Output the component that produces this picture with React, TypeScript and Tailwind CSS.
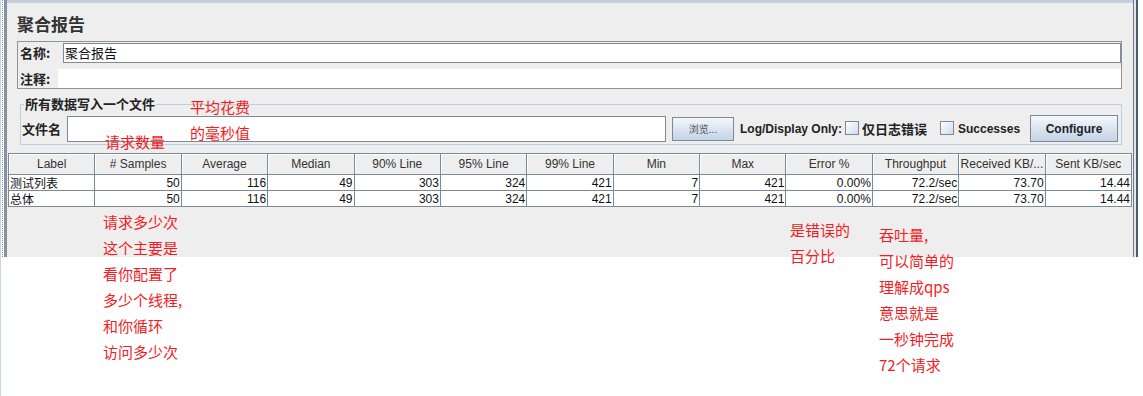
import React from "react";

const cjk = { fontFamily: '"Noto Sans CJK SC", "Liberation Sans", sans-serif' };
const sans = { fontFamily: '"Liberation Sans", Arial, "Noto Sans CJK SC", sans-serif' };

const headers = [
  "Label",
  "# Samples",
  "Average",
  "Median",
  "90% Line",
  "95% Line",
  "99% Line",
  "Min",
  "Max",
  "Error %",
  "Throughput",
  "Received KB/...",
  "Sent KB/sec",
];

const rows = [
  ["测试列表", "50", "116", "49", "303", "324", "421", "7", "421", "0.00%", "72.2/sec", "73.70", "14.44"],
  ["总体", "50", "116", "49", "303", "324", "421", "7", "421", "0.00%", "72.2/sec", "73.70", "14.44"],
];

function Checkbox() {
  return (
    <span className="inline-block w-[14px] h-[14px] border border-[#7a8a99] bg-gradient-to-br from-[#ffffff] to-[#cfdbe8] shrink-0" />
  );
}

function Note({ lines, className }: { lines: string[]; className: string }) {
  return (
    <div className={"absolute text-[15px] leading-[26px] text-[#f31c24] whitespace-nowrap " + className} style={cjk}>
      {lines.map((l, i) => (
        <div key={i}>{l}</div>
      ))}
    </div>
  );
}

export default function App() {
  return (
    <div className="relative w-[1143px] h-[396px] bg-white overflow-hidden">
      <div className="absolute left-0 top-0 w-[1px] h-full bg-[#c9d6ea]" />
      <div className="flex h-[257px]">
        {/* left dotted strip */}
        <div className="w-[1px] h-full bg-[#c9d6ea]" />
        <div className="w-[3px] flex justify-center">
          <div className="w-0 h-full border-l border-dotted border-[#8a96a4]" />
        </div>
        <div className="w-[3px] h-full bg-[#8593a3]" />
        <div className="flex flex-col w-[1126px]">
          <div className="h-[3px] bg-[#c6cfe0]" />
          <div className="flex-1 bg-[#eeeeee] flex flex-col">
            {/* title */}
            <div className="h-[38px] flex items-center pl-[10px] pt-[3px] text-[17px] font-bold text-[#333]" style={cjk}>
              聚合报告
            </div>

            {/* name / comment box */}
            <div className="ml-[10px] mr-[11px] h-[48px] border border-[#8e9398] flex flex-col">
              <div className="flex items-center h-[21px] pt-[1px]">
                <span className="w-[45px] pl-[2px] text-[13px] font-bold text-[#222]" style={cjk}>
                  名称:
                </span>
                <div className="flex-1 h-[20px] bg-white border border-[#7a8a99] flex items-center pl-[1px] text-[13px] text-[#111]" style={cjk}>
                  聚合报告
                </div>
              </div>
              <div className="flex items-center h-[19px] mt-[6px]">
                <span className="w-[40px] pl-[2px] text-[13px] font-bold text-[#222]" style={cjk}>
                  注释:
                </span>
                <div className="flex-1 h-full bg-white" />
              </div>
            </div>

            {/* fieldset */}
            <fieldset className="ml-[13px] mr-[11px] mt-[7px] border border-[#b9cfe5] px-[1px] pb-[2px]">
              <legend className="ml-[2px] px-[1px] h-[16px] leading-[16px] text-[13px] font-bold text-[#222]" style={cjk}>
                所有数据写入一个文件
              </legend>
              <div className="flex items-center h-[27px] mt-[3px]">
                <span className="w-[45px] text-[13px] font-bold text-[#222]" style={cjk}>
                  文件名
                </span>
                <div className="w-[599px] h-[26px] bg-white border border-[#7a8a99]" />
                <button
                  className="ml-[6px] w-[62px] h-[24px] border border-[#7a8a99] bg-gradient-to-b from-[#f4f7fb] to-[#c3d3e6] text-[10px] text-[#555] flex items-center justify-center"
                  style={cjk}
                >
                  浏览...
                </button>
                <span className="ml-[6px] w-[99px] text-[12px] font-bold text-[#222] whitespace-nowrap" style={sans}>
                  Log/Display Only:
                </span>
                <span className="ml-[6px]">
                  <Checkbox />
                </span>
                <span className="ml-[3px] w-[68px] text-[13px] font-bold text-[#222] whitespace-nowrap" style={cjk}>
                  仅日志错误
                </span>
                <span className="ml-[10px]">
                  <Checkbox />
                </span>
                <span className="ml-[4px] w-[68px] text-[12px] font-bold text-[#222] whitespace-nowrap" style={sans}>
                  Successes
                </span>
                <button
                  className="ml-[4px] w-[88px] h-[27px] border border-[#7a8a99] bg-gradient-to-b from-[#f4f7fb] to-[#c3d3e6] text-[12px] font-bold text-[#222] flex items-center justify-center"
                  style={sans}
                >
                  Configure
                </button>
              </div>
            </fieldset>

            {/* table */}
            <div
              className="ml-[1px] mr-[1px] mt-[8px] grid grid-cols-[repeat(13,minmax(0,1fr))] border-t border-l border-[#7a8a99]"
              style={sans}
            >
              {headers.map((h) => (
                <div
                  key={h}
                  className="h-[21px] flex items-center justify-center border-r border-b border-[#7a8a99] bg-[#eeeeee] text-[12px] text-[#333] whitespace-nowrap overflow-hidden shadow-[inset_1px_1px_0_#ffffff]"
                >
                  {h}
                </div>
              ))}
              {rows.map((r, ri) =>
                r.map((c, ci) => (
                  <div
                    key={ri + "-" + ci}
                    className={
                      "h-[16px] flex items-center border-r border-b border-[#7a8a99] bg-white text-[12px] text-[#111] whitespace-nowrap overflow-hidden " +
                      (ci === 0 ? "justify-start pl-[1px]" : "justify-end pr-[1px]")
                    }
                    style={ci === 0 ? cjk : sans}
                  >
                    {c}
                  </div>
                ))
              )}
            </div>
          </div>
        </div>
        {/* right edge */}
        <div className="w-[1px] h-full bg-[#6c7a88]" />
        <div className="w-[2px] h-full bg-[#e4e6ea]" />
        <div className="w-[2px] h-full bg-[#4c5a68]" />
      </div>

      {/* annotations */}
      <Note lines={["平均花费", "的毫秒值"]} className="left-[190px] top-[94px]" />
      <Note lines={["请求数量"]} className="left-[105px] top-[129px]" />
      <Note
        lines={["请求多少次", "这个主要是", "看你配置了", "多少个线程,", "和你循环", "访问多少次"]}
        className="left-[103px] top-[209px]"
      />
      <Note lines={["是错误的", "百分比"]} className="left-[790px] top-[217px]" />
      <Note
        lines={["吞吐量,", "可以简单的", "理解成qps", "意思就是", "一秒钟完成", "72个请求"]}
        className="left-[879px] top-[222px]"
      />
    </div>
  );
}
